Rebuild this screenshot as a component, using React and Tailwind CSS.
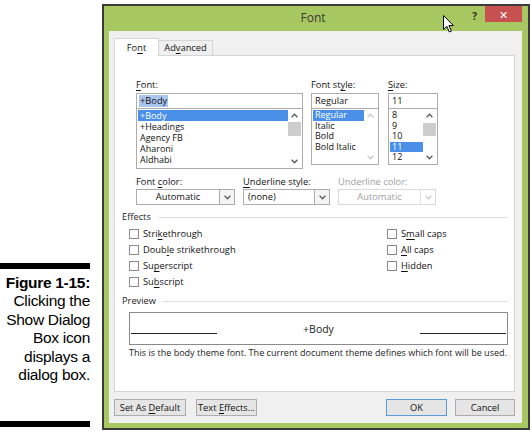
import React from "react";

const U = ({ children }) => (
  <span className="underline decoration-[0.8px] underline-offset-[1.5px]">{children}</span>
);

function ChevronUp({ color }) {
  return (
    <svg width="7" height="5" viewBox="0 0 7 5">
      <path d="M0.6 4.2 L3.5 1.2 L6.4 4.2" fill="none" stroke={color} strokeWidth="1.3" />
    </svg>
  );
}

function ChevronDown({ color }) {
  return (
    <svg width="7" height="5" viewBox="0 0 7 5">
      <path d="M0.6 0.8 L3.5 3.8 L6.4 0.8" fill="none" stroke={color} strokeWidth="1.3" />
    </svg>
  );
}

function ScrollBar({ disabled, thumb }) {
  const color = disabled ? "#c9c9c9" : "#5c5c5c";
  return (
    <div className="flex w-[13px] flex-col">
      <div className="flex h-[11px] items-center justify-center">
        <ChevronUp color={color} />
      </div>
      <div className="flex-1">{thumb && <div className={`${thumb} w-full bg-[#cdcdcd]`} />}</div>
      <div className="flex h-[11px] items-center justify-center">
        <ChevronDown color={color} />
      </div>
    </div>
  );
}

function ListBox({ items, selected, box, row, disabled, thumb }) {
  return (
    <div className={`${box} flex border border-[#acacac] bg-white p-px`}>
      <div className="flex-1 text-[9px]">
        {items.map((item) => (
          <div
            key={item}
            className={`${row} px-[2px] ${item === selected ? "bg-[#4a8fe8] text-white" : "text-[#111]"}`}
          >
            {item}
          </div>
        ))}
      </div>
      <ScrollBar disabled={disabled} thumb={thumb} />
    </div>
  );
}

function Combo({ value, w, disabled, center }) {
  return (
    <div
      className={`${w} flex h-[16px] border bg-white ${
        disabled ? "border-[#d9d9d9] text-[#a0a0a0]" : "border-[#acacac] text-[#111]"
      }`}
    >
      <div className={`flex flex-1 items-center px-[4px] leading-[14px] ${center ? "justify-center" : ""}`}>
        <span>{value}</span>
      </div>
      <div
        className={`flex w-[15px] items-center justify-center border-l ${
          disabled ? "border-[#e3e3e3]" : "border-[#acacac] bg-[#f4f4f4]"
        }`}
      >
        <ChevronDown color={disabled ? "#c9c9c9" : "#5c5c5c"} />
      </div>
    </div>
  );
}

function Check({ children }) {
  return (
    <div className="flex h-[16px] items-center gap-[4px]">
      <div className="h-[10px] w-[10px] border border-[#8a8a8a] bg-white" />
      <span>{children}</span>
    </div>
  );
}

function Button({ children, w, primary }) {
  return (
    <div
      className={`${w} flex h-[17px] items-center justify-center border bg-[#e5e5e5] text-[#111] ${
        primary ? "border-[#5b9bd5]" : "border-[#adadad]"
      }`}
    >
      <span>{children}</span>
    </div>
  );
}

function SectionTitle({ children, line }) {
  return (
    <div className="flex h-[12px] items-center">
      <span className="leading-[12px] text-[#222]">{children}</span>
      <div className={`${line} h-px flex-1 bg-[#dedede]`} />
    </div>
  );
}

function Caption() {
  return (
    <div className="w-[90px] pt-[263px] font-['Liberation_Sans',sans-serif] text-black">
      <div className="h-[6px] bg-black" />
      <div className="mt-[5px] text-right text-[15.5px] leading-[18.4px] tracking-[-0.3px]">
        <div className="font-bold">Figure 1-15:</div>
        <div>Clicking the</div>
        <div>Show Dialog</div>
        <div>Box icon</div>
        <div>displays a</div>
        <div>dialog box.</div>
      </div>
      <div className="mt-[37px] h-[6px] bg-black" />
    </div>
  );
}

function FontDialog() {
  return (
    <div className="relative mt-[4px] ml-[12px] flex h-[426px] w-[428px] flex-col border-2 border-[#3b3b3b] bg-[#a7c861] font-['Open_Sans',sans-serif] text-[9.3px] text-[#111]">
      {/* title bar */}
      <div className="flex h-[25px] pr-[6px]">
        <div className="flex-1" />
        <div className="pt-[5px] text-[12px] leading-[14px] text-[#3a3a3a]">Font</div>
        <div className="flex flex-1 justify-end">
          <span className="mt-[4px] mr-[8px] text-[10px] font-bold leading-[12px] text-[#2c2c2c]">?</span>
          <div className="flex h-[16px] w-[37px] items-center justify-center bg-[#c75050] text-[11px] leading-none text-white">
            ✕
          </div>
        </div>
      </div>

      {/* mouse pointer */}
      <svg className="absolute top-[9px] left-[339px]" width="12" height="18" viewBox="0 0 12 18">
        <path
          d="M0.5 0.5 L0.5 14.5 L3.8 11.3 L6.3 17 L8.4 16.1 L5.9 10.6 L10.4 10.6 Z"
          fill="#fff"
          stroke="#000"
          strokeWidth="1"
          strokeLinejoin="round"
        />
      </svg>

      {/* panel */}
      <div className="mr-[6px] ml-[5px] flex h-[392px] flex-col bg-[#f0f0f0] pt-[7px] pr-[7px] pb-[7px] pl-[5px]">
        {/* tabs */}
        <div className="flex h-[17px] items-end">
          <div className="relative z-10 -mb-px flex h-[18px] w-[45px] items-center justify-center border border-b-0 border-[#d5d5d5] bg-white">
            <span>
              Fo<U>n</U>t
            </span>
          </div>
          <div className="flex h-[15px] w-[54px] items-center justify-center border border-l-0 border-b-0 border-[#d5d5d5] bg-[#f0f0f0]">
            <span>
              Ad<U>v</U>anced
            </span>
          </div>
        </div>

        {/* tab body */}
        <div className="h-[337px] border border-[#d5d5d5] bg-white pt-[23px] pl-[7px]">
          <div className="pl-[14px]">
            <div className="flex gap-[8px]">
              <div className="w-[167px]">
                <div className="h-[12px] leading-[12px]">
                  <U>F</U>ont:
                </div>
                <div className="mt-[2px] flex h-[16px] items-center border border-[#acacac] bg-white px-[2px]">
                  <span className="bg-[#a9c6ef] px-px leading-[12px]">+Body</span>
                </div>
                <ListBox
                  box="h-[60px] border-t-0"
                  row="h-[11px] leading-[11px]"
                  items={["+Body", "+Headings", "Agency FB", "Aharoni", "Aldhabi"]}
                  selected="+Body"
                  thumb="mt-[1px] h-[14px]"
                />
              </div>
              <div className="w-[68px]">
                <div className="h-[12px] leading-[12px]">
                  Font st<U>y</U>le:
                </div>
                <div className="mt-[2px] flex h-[16px] items-center border border-[#acacac] bg-white px-[3px]">
                  Regular
                </div>
                <ListBox
                  box="h-[56px] border-t-0"
                  row="h-[10.5px] leading-[10.5px]"
                  items={["Regular", "Italic", "Bold", "Bold Italic"]}
                  selected="Regular"
                  disabled
                />
              </div>
              <div className="ml-px w-[50px]">
                <div className="h-[12px] leading-[12px]">
                  <U>S</U>ize:
                </div>
                <div className="mt-[2px] flex h-[16px] items-center border border-[#acacac] bg-white px-[3px]">
                  11
                </div>
                <ListBox
                  box="h-[56px] border-t-0"
                  row="h-[10.5px] leading-[10.5px]"
                  items={["8", "9", "10", "11", "12"]}
                  selected="11"
                  thumb="mt-[2px] h-[13px]"
                />
              </div>
            </div>

            <div className="mt-[7px] flex gap-[8px]">
              <div>
                <div className="h-[12px] leading-[12px]">
                  Font <U>c</U>olor:
                </div>
                <div className="mt-px">
                  <Combo w="w-[99px]" value="Automatic" center />
                </div>
              </div>
              <div>
                <div className="h-[12px] leading-[12px]">
                  <U>U</U>nderline style:
                </div>
                <div className="mt-px">
                  <Combo w="w-[87px]" value="(none)" />
                </div>
              </div>
              <div>
                <div className="h-[12px] leading-[12px] text-[#a0a0a0]">Underline color:</div>
                <div className="mt-px">
                  <Combo w="w-[98px]" value="Automatic" center disabled />
                </div>
              </div>
            </div>
          </div>

          <div className="mt-[6px] pr-[6px]">
            <SectionTitle line="ml-[8px]">Effects</SectionTitle>
          </div>
          <div className="mt-[3px] grid grid-cols-[258px_1fr] pl-[7px]">
            <div>
              <Check>
                Stri<U>k</U>ethrough
              </Check>
              <Check>
                Doub<U>l</U>e strikethrough
              </Check>
              <Check>
                Su<U>p</U>erscript
              </Check>
              <Check>
                Su<U>b</U>script
              </Check>
            </div>
            <div>
              <Check>
                S<U>m</U>all caps
              </Check>
              <Check>
                <U>A</U>ll caps
              </Check>
              <Check>
                <U>H</U>idden
              </Check>
            </div>
          </div>

          <div className="mt-[5px] pr-[6px]">
            <SectionTitle line="ml-[6px]">Preview</SectionTitle>
          </div>
          <div className="mt-[5px] mr-[6px] ml-[7px] flex h-[33px] items-start border border-[#8a8a8a] pt-[9px]">
            <div className="mt-[11px] ml-px h-px w-[86px] bg-[#222]" />
            <div className="flex-1 text-center text-[10.5px] leading-[14px] text-[#222]">+Body</div>
            <div className="mt-[11px] mr-px h-px w-[86px] bg-[#222]" />
          </div>
          <div className="mt-[2px] ml-[7px] h-[12px] whitespace-nowrap text-[9px] leading-[12px] tracking-[0.02px] text-[#222]">
            This is the body theme font. The current document theme defines which font will be used.
          </div>
        </div>

        {/* buttons */}
        <div className="mt-[7px] flex">
          <Button w="w-[72px]">
            Set As <U>D</U>efault
          </Button>
          <div className="ml-[10px]">
            <Button w="w-[61px]">
              Text <U>E</U>ffects...
            </Button>
          </div>
          <div className="flex-1" />
          <Button w="w-[61px]" primary>
            OK
          </Button>
          <div className="ml-[8px]">
            <Button w="w-[60px]">Cancel</Button>
          </div>
        </div>
      </div>
    </div>
  );
}

export default function App() {
  return (
    <div className="flex h-[432px] w-[532px] overflow-hidden bg-white">
      <Caption />
      <FontDialog />
    </div>
  );
}
